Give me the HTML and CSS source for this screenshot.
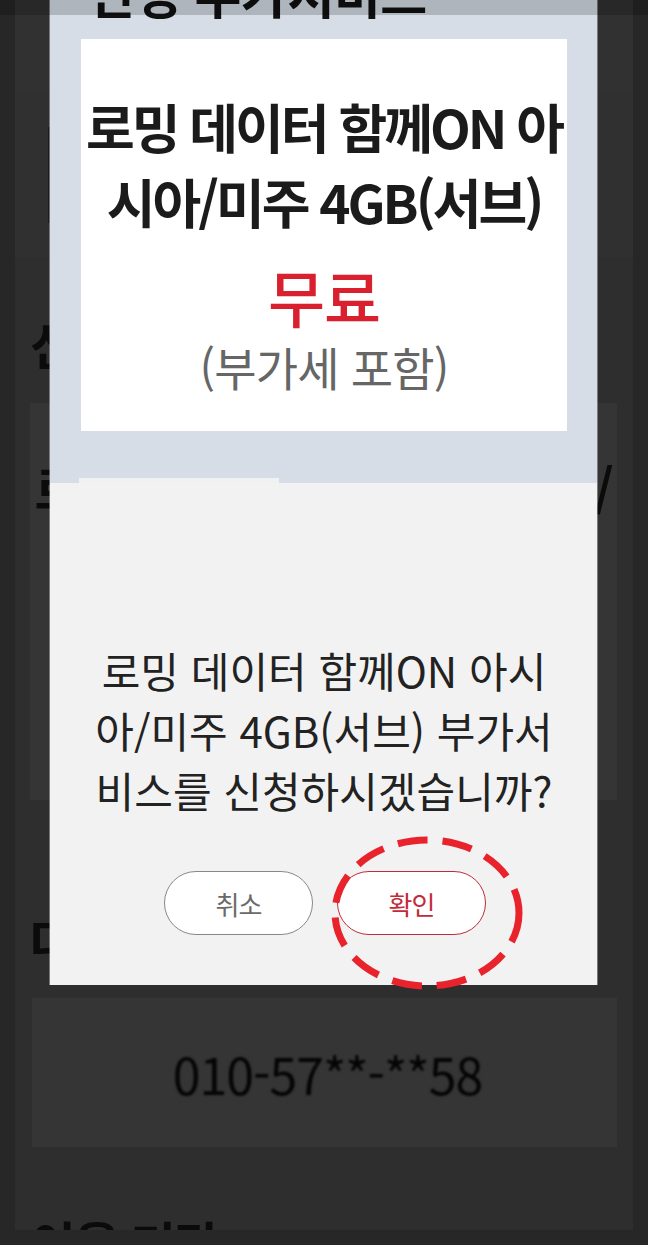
FILE: index.html
```html
<!DOCTYPE html>
<html lang="ko">
<head>
<meta charset="utf-8">
<title>부가서비스 신청</title>
<link rel="stylesheet" href="styles.css">
</head>
<body>
<div class="page">
  <div class="bg-header"></div>
  <div class="bg-section"><div class="bg-rule"></div></div>
  <div class="bg-body">
    <h3 class="bg-heading bg-heading-first">신청 정보</h3>
    <div class="bg-box bg-box-large">
      <p class="bg-box-title">로밍 데이터 함께ON 아시아/미주 4GB(서브)</p>
    </div>
    <h3 class="bg-heading bg-heading-second">대상 번호</h3>
    <div class="bg-box bg-box-small">
      <p class="bg-number">010-57**-**58</p>
    </div>
    <h3 class="bg-heading bg-heading-third">이용 기간</h3>
  </div>
</div>

<div class="modal">
  <div class="modal-head">
    <h2 class="modal-title">신청 부가서비스</h2>
    <div class="product-card">
      <p class="product-name">로밍 데이터 함께ON 아시아/미주 4GB(서브)</p>
      <p class="product-price">무료</p>
      <p class="product-vat">(부가세 포함)</p>
    </div>
  </div>
  <div class="modal-tab-row"><div class="modal-tab"></div></div>
  <div class="modal-body">
    <p class="modal-message">로밍 데이터 함께ON 아시아/미주 4GB(서브) 부가서비스를 신청하시겠습니까?</p>
    <div class="modal-actions">
      <button class="btn btn-cancel" type="button">취소</button>
      <button class="btn btn-confirm" type="button">확인</button>
    </div>
  </div>
</div>

<svg class="annotation" width="200" height="160" viewBox="0 0 200 160" aria-hidden="true">
  <ellipse cx="99" cy="79" rx="92" ry="73" fill="none" stroke="#e8232b" stroke-width="7" stroke-dasharray="30 15"></ellipse>
</svg>

<div class="edge-band"></div>
</body>
</html>
```

FILE: styles.css
```css
html, body {
  margin: 0;
  padding: 0;
}

body {
  width: 648px;
  height: 1245px;
  overflow: hidden;
  position: relative;
  background: #272727;
  font-family: "Noto Sans CJK KR", "Noto Sans", sans-serif;
}

p, h2, h3 {
  margin: 0;
}

/* dimmed background page */
.page {
  margin: 0 15px;
  height: 1230px;
  background: #2e2e2e;
  overflow: hidden;
}

.bg-header {
  height: 93px;
  background: #313131;
}

.bg-section {
  height: 164px;
  background: #303030;
  padding-top: 34px;
  box-sizing: border-box;
}

.bg-rule {
  margin-left: 33px;
  width: 2px;
  height: 96px;
  background: #1c1c1c;
}

.bg-body {
  padding: 0 16px 0 15px;
}

.bg-heading {
  font-size: 50px;
  line-height: 64px;
  font-weight: 700;
  color: #0b0b0b;
  letter-spacing: -2px;
  white-space: nowrap;
}

.bg-heading-first { margin-top: 54px; }
.bg-heading-second { margin-top: 106px; }
.bg-heading-third { margin-top: 63px; }

.bg-box {
  background: #353535;
  box-sizing: border-box;
}

.bg-box-large {
  margin-top: 28px;
  height: 397px;
  padding-top: 48px;
  text-align: center;
}

.bg-box-title {
  font-size: 50px;
  line-height: 72px;
  font-weight: 700;
  color: #0b0b0b;
  letter-spacing: -1.2px;
}

.bg-box-small {
  margin-top: 28px;
  margin-left: 2px;
  height: 149px;
  display: flex;
  align-items: center;
  justify-content: center;
}

.bg-number {
  font-size: 50px;
  line-height: 1;
  color: #050505;
  letter-spacing: -1px;
  filter: blur(1px);
  padding-left: 6px;
}

/* modal */
.modal {
  position: absolute;
  left: 50px;
  top: -36px;
  width: 547px;
  z-index: 2;
  box-shadow: 1px 0 0 rgba(255, 255, 255, 0.35), -1px 0 0 rgba(255, 255, 255, 0.35);
}

.modal-head {
  background: #d6dde6;
  padding: 0 30px 47px 31px;
}

.modal-title {
  height: 56px;
  font-size: 51px;
  line-height: 56px;
  font-weight: 700;
  color: #111;
  padding-left: 7px;
  letter-spacing: -0.5px;
  white-space: nowrap;
}

.product-card {
  margin-top: 19px;
  height: 392px;
  box-sizing: border-box;
  background: #ffffff;
  padding: 50px 0 0;
  text-align: center;
}

.product-name {
  font-size: 53px;
  line-height: 75px;
  font-weight: 700;
  color: #1b1b1b;
  letter-spacing: -3px;
}

.product-price {
  margin-top: 22px;
  font-size: 62px;
  line-height: 70px;
  font-weight: 500;
  color: #d9202e;
  letter-spacing: -1px;
}

.product-vat {
  margin-top: 7px;
  font-size: 46px;
  line-height: 56px;
  font-weight: 400;
  color: #666666;
  letter-spacing: -0.8px;
}

.modal-tab-row {
  height: 5px;
  background: #d6dde6;
}

.modal-tab {
  margin-left: 29px;
  width: 200px;
  height: 5px;
  background: #f0f1f3;
}

.modal-body {
  background: #f2f2f2;
  height: 502px;
  box-sizing: border-box;
  padding: 157px 37px 0 38px;
}

.modal-message {
  font-size: 42px;
  line-height: 60px;
  font-weight: 400;
  color: #222222;
  text-align: center;
  letter-spacing: 0;
}

.modal-actions {
  margin-top: 51px;
  display: flex;
  justify-content: center;
  gap: 24px;
  padding-left: 2px;
}

.btn {
  width: 149px;
  height: 64px;
  border-radius: 32px;
  background: #ffffff;
  font-family: inherit;
  font-size: 26px;
  font-weight: 400;
  letter-spacing: -1px;
  padding: 0;
  box-sizing: border-box;
}

.btn-cancel {
  border: 1.5px solid #888888;
  color: #6a6a6a;
}

.btn-confirm {
  border: 1.5px solid #c32a3a;
  color: #c32a3a;
}

/* red hand-drawn style highlight */
.annotation {
  position: absolute;
  left: 328px;
  top: 834px;
  z-index: 3;
}

/* darker frame band at the top */
.edge-band {
  position: absolute;
  left: 0;
  top: 0;
  width: 648px;
  height: 15px;
  background: rgba(0, 0, 0, 0.18);
  z-index: 4;
}
```
